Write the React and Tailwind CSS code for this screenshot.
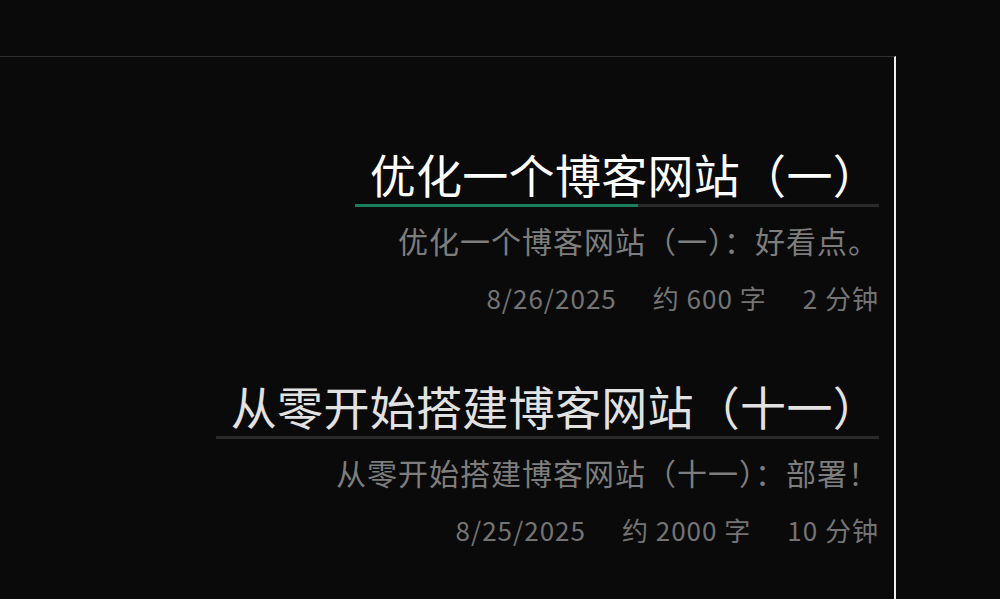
import React from 'react';

const posts = [
  {
    title: '优化一个博客网站（一）',
    desc: '优化一个博客网站（一）：好看点。',
    date: '8/26/2025',
    words: '约 600 字',
    time: '2 分钟',
    progress: 54,
    active: true,
  },
  {
    title: '从零开始搭建博客网站（十一）',
    desc: '从零开始搭建博客网站（十一）：部署！',
    date: '8/25/2025',
    words: '约 2000 字',
    time: '10 分钟',
    progress: 0,
    active: false,
  },
];

function PostItem({ post }) {
  return (
    <div className="flex flex-col items-end">
      <div className="relative pl-[15px] pb-[5px] border-b-[3px] border-[#2a2a2a]">
        <h2
          className={`text-[46px] leading-[52px] font-normal tracking-[0.3px] ${post.active ? 'text-white' : 'text-[#e2e2e2]'}`}
        >
          {post.title}
        </h2>
        {post.progress > 0 && (
          <div
            className="absolute left-0 -bottom-[3px] h-[3px] bg-[#1b7f5c]"
            style={{ width: `${post.progress}%` }}
          />
        )}
      </div>
      <p className="mt-[15px] text-[30px] leading-[36px] tracking-[1px] text-[#7d7d7d]">{post.desc}</p>
      <div className="mt-[24px] flex gap-[36px] text-[26px] leading-[32px] tracking-[1px] text-[#747474]">
        <span>{post.date}</span>
        <span>{post.words}</span>
        <span>{post.time}</span>
      </div>
    </div>
  );
}

export default function App() {
  return (
    <div
      className="w-[1000px] h-[599px] overflow-hidden bg-[#0a0a0a]"
      style={{ fontFamily: '"Noto Sans CJK SC", "Noto Sans", sans-serif' }}
    >
      <div className="h-[56px]" />
      <div className="w-[896px] h-[543px] border-t border-[#2e2e2e] border-r-2 border-r-[#f0f0f0] pt-[90px] pr-[15px] flex flex-col gap-[65px]">
        {posts.map((p) => (
          <PostItem key={p.title} post={p} />
        ))}
      </div>
    </div>
  );
}
